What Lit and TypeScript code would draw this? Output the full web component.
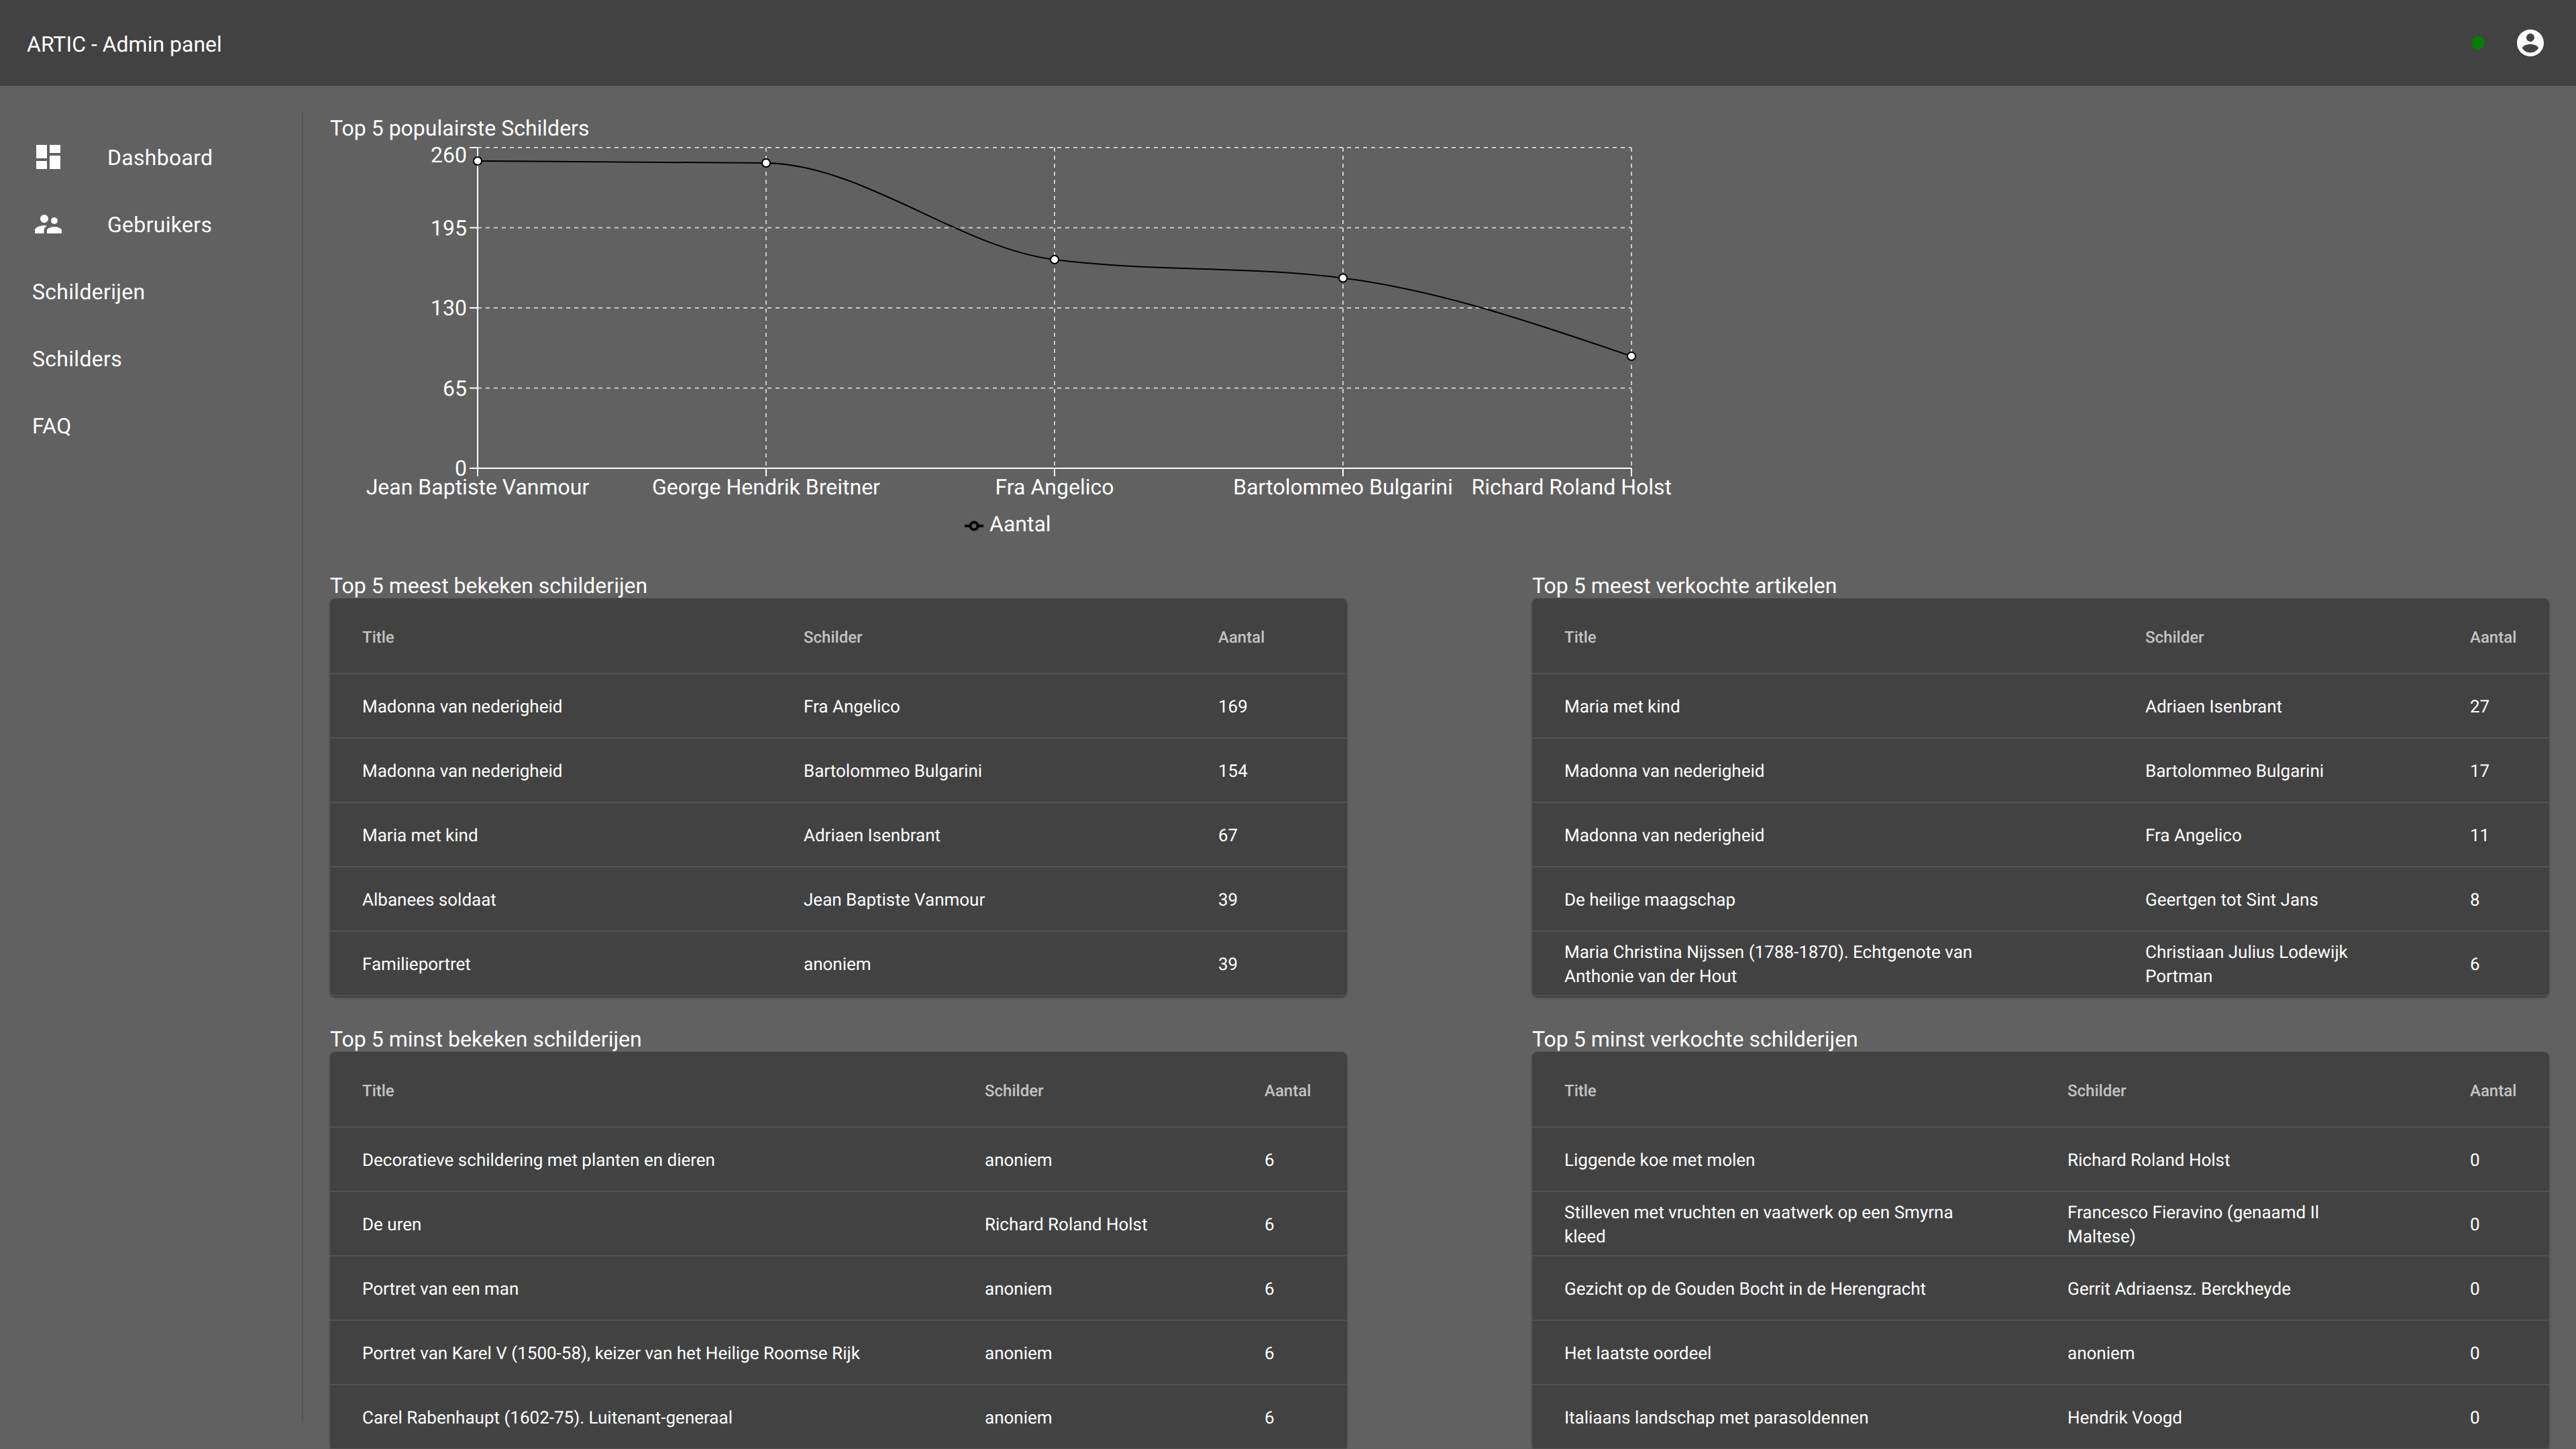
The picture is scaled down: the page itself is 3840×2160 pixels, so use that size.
import { LitElement, html, svg, css } from "lit";
import { customElement } from "lit/decorators.js";

type Row = [string, string, string];
type TopTable = { title: string; cols: number[]; rows: Row[] };

const tables: TopTable[] = [
  {
    title: "Top 5 meest bekeken schilderijen",
    cols: [658, 618, 240],
    rows: [
      ["Madonna van nederigheid", "Fra Angelico", "169"],
      ["Madonna van nederigheid", "Bartolommeo Bulgarini", "154"],
      ["Maria met kind", "Adriaen Isenbrant", "67"],
      ["Albanees soldaat", "Jean Baptiste Vanmour", "39"],
      ["Familieportret", "anoniem", "39"],
    ],
  },
  {
    title: "Top 5 meest verkochte artikelen",
    cols: [866, 484, 166],
    rows: [
      ["Maria met kind", "Adriaen Isenbrant", "27"],
      ["Madonna van nederigheid", "Bartolommeo Bulgarini", "17"],
      ["Madonna van nederigheid", "Fra Angelico", "11"],
      ["De heilige maagschap", "Geertgen tot Sint Jans", "8"],
      ["Maria Christina Nijssen (1788-1870). Echtgenote van Anthonie van der Hout", "Christiaan Julius Lodewijk Portman", "6"],
    ],
  },
  {
    title: "Top 5 minst bekeken schilderijen",
    cols: [928, 417, 171],
    rows: [
      ["Decoratieve schildering met planten en dieren", "anoniem", "6"],
      ["De uren", "Richard Roland Holst", "6"],
      ["Portret van een man", "anoniem", "6"],
      ["Portret van Karel V (1500-58), keizer van het Heilige Roomse Rijk", "anoniem", "6"],
      ["Carel Rabenhaupt (1602-75). Luitenant-generaal", "anoniem", "6"],
    ],
  },
  {
    title: "Top 5 minst verkochte schilderijen",
    cols: [750, 600, 166],
    rows: [
      ["Liggende koe met molen", "Richard Roland Holst", "0"],
      ["Stilleven met vruchten en vaatwerk op een Smyrna kleed", "Francesco Fieravino (genaamd Il Maltese)", "0"],
      ["Gezicht op de Gouden Bocht in de Herengracht", "Gerrit Adriaensz. Berckheyde", "0"],
      ["Het laatste oordeel", "anoniem", "0"],
      ["Italiaans landschap met parasoldennen", "Hendrik Voogd", "0"],
    ],
  },
];

// svg coordinates: the chart box starts at 492,210 on the page
const xs = [220, 650, 1080, 1510, 1940];
const ys = [30, 33, 177, 204.5, 321];
const gridY = [10, 129.5, 249, 368.5, 488];
const yLabels = ["260", "195", "130", "65", "0"];
const names = ["Jean Baptiste Vanmour", "George Hendrik Breitner", "Fra Angelico", "Bartolommeo Bulgarini", "Richard Roland Holst"];

// same curve as d3's curveMonotoneX
function monotonePath(px: number[], py: number[]) {
  const n = px.length;
  const s: number[] = [];
  for (let i = 0; i < n - 1; i++) s.push((py[i + 1] - py[i]) / (px[i + 1] - px[i]));
  const t: number[] = [];
  for (let i = 1; i < n - 1; i++) {
    const h0 = px[i] - px[i - 1];
    const h1 = px[i + 1] - px[i];
    const p = (s[i - 1] * h1 + s[i] * h0) / (h0 + h1);
    t[i] = (Math.sign(s[i - 1]) + Math.sign(s[i])) * Math.min(Math.abs(s[i - 1]), Math.abs(s[i]), 0.5 * Math.abs(p)) || 0;
  }
  t[0] = (3 * s[0] - t[1]) / 2;
  t[n - 1] = (3 * s[n - 2] - t[n - 2]) / 2;
  let d = `M${px[0]},${py[0]}`;
  for (let i = 0; i < n - 1; i++) {
    const h = (px[i + 1] - px[i]) / 3;
    d += `C${px[i] + h},${py[i] + h * t[i]} ${px[i + 1] - h},${py[i + 1] - h * t[i + 1]} ${px[i + 1]},${py[i + 1]}`;
  }
  return d;
}

@customElement("app-root")
export class AppRoot extends LitElement {
  static styles = css`
    :host {
      display: block;
      min-height: 2160px;
      background: #616161;
      color: #fff;
      font-family: Roboto, "Liberation Sans", sans-serif;
      text-rendering: geometricPrecision;
    }
    .bar {
      height: 128px;
      background: #424242;
      display: flex;
      align-items: center;
      padding: 0 44px 0 40px;
      font-size: 32px;
      box-sizing: border-box;
    }
    .bar-title {
      flex: 1;
      padding-top: 4px;
    }
    .dot {
      width: 20px;
      height: 20px;
      border-radius: 50%;
      background: #008000;
      margin-right: 44px;
    }
    .bar svg {
      width: 48px;
      height: 48px;
      fill: #fff;
      display: block;
    }
    .layout {
      display: flex;
      align-items: flex-start;
    }
    .side {
      width: 452px;
      height: 1951px;
      margin-top: 40px;
      padding-top: 16px;
      box-sizing: border-box;
      border-right: 2px solid #555;
      flex: none;
    }
    .item {
      height: 100px;
      display: flex;
      align-items: center;
      padding-left: 48px;
      font-size: 32px;
      letter-spacing: 0.3px;
    }
    .label {
      padding-top: 2px;
    }
    .item svg {
      width: 48px;
      height: 48px;
      fill: #fff;
      margin-right: 64px;
      flex: none;
    }
    .main {
      flex: 1;
      min-width: 0;
      padding: 44px 40px 0;
    }
    .heading {
      font-size: 32px;
      line-height: 38px;
    }
    .chart {
      display: block;
      width: 2000px;
      height: 600px;
      margin-bottom: 44px;
    }
    .chart text {
      font-family: Roboto, "Liberation Sans", sans-serif;
      font-size: 32px;
      fill: #fff;
    }
    .grid {
      display: grid;
      grid-template-columns: 1516px 1516px;
      column-gap: 276px;
      row-gap: 45px;
    }
    .card {
      background: #424242;
      border-radius: 8px;
      box-shadow: 0 2px 2px 0 rgba(0, 0, 0, 0.14), 0 2px 4px 0 rgba(0, 0, 0, 0.2), 0 4px 2px -2px rgba(0, 0, 0, 0.12);
    }
    table {
      width: 100%;
      table-layout: fixed;
      border-collapse: collapse;
    }
    th,
    td {
      text-align: left;
      padding: 4px 112px 0 48px;
      border-bottom: 2px solid #515151;
      box-sizing: border-box;
    }
    th:last-child,
    td:last-child {
      padding-right: 48px;
    }
    th {
      height: 112px;
      font-size: 24px;
      font-weight: 500;
      color: rgba(255, 255, 255, 0.7);
    }
    td {
      height: 96px;
      font-size: 26px;
      line-height: 36px;
      font-weight: 400;
    }
  `;

  private renderChart() {
    const [l, r] = [xs[0], xs[4]];
    return html`<svg class="chart" viewBox="0 0 2000 600" xmlns="http://www.w3.org/2000/svg">
      ${gridY.slice(0, 4).map((y) => svg`<line x1=${l} x2=${r} y1=${y} y2=${y} stroke="#ccc" stroke-width="2" stroke-dasharray="6 6"></line>`)}
      ${xs.slice(1).map((x) => svg`<line x1=${x} x2=${x} y1=${gridY[0]} y2=${gridY[4]} stroke="#ccc" stroke-width="2" stroke-dasharray="6 6"></line>`)}
      <line x1=${l} x2=${l} y1=${gridY[0]} y2=${gridY[4]} stroke="#fff" stroke-width="2"></line>
      <line x1=${l} x2=${r} y1=${gridY[4]} y2=${gridY[4]} stroke="#fff" stroke-width="2"></line>
      ${gridY.map((y, i) => svg`
        <line x1=${l - 12} x2=${l} y1=${y} y2=${y} stroke="#fff" stroke-width="2"></line>
        <text x=${l - 16} y=${y + (i === 0 ? 22 : 11)} text-anchor="end">${yLabels[i]}</text>`)}
      ${xs.map((x, i) => svg`
        <line x1=${x} x2=${x} y1=${gridY[4]} y2=${gridY[4] + 12} stroke="#fff" stroke-width="2"></line>
        <text x=${i === 4 ? 2000 : x} y="527" text-anchor=${i === 4 ? "end" : "middle"}>${names[i]}</text>`)}
      <path d=${monotonePath(xs, ys)} fill="none" stroke="#000" stroke-width="2"></path>
      ${xs.map((x, i) => svg`<circle cx=${x} cy=${ys[i]} r="6" fill="#fff" stroke="#000" stroke-width="2"></circle>`)}
      <line x1="946" x2="974" y1="574" y2="574" stroke="#000" stroke-width="4"></line>
      <circle cx="960" cy="574" r="5.5" fill="#616161" stroke="#000" stroke-width="4"></circle>
      <text x="983" y="582">Aantal</text>
    </svg>`;
  }

  private renderTable(t: TopTable) {
    return html`<section>
      <div class="heading">${t.title}</div>
      <div class="card">
        <table>
          <colgroup>
            ${t.cols.map((w) => html`<col style="width: ${w}px" />`)}
          </colgroup>
          <thead>
            <tr><th>Title</th><th>Schilder</th><th>Aantal</th></tr>
          </thead>
          <tbody>
            ${t.rows.map((r) => html`<tr><td>${r[0]}</td><td>${r[1]}</td><td>${r[2]}</td></tr>`)}
          </tbody>
        </table>
      </div>
    </section>`;
  }

  render() {
    return html`
      <div class="bar">
        <div class="bar-title">ARTIC - Admin panel</div>
        <div class="dot"></div>
        <svg viewBox="0 0 24 24"><path d="M12 2C6.48 2 2 6.48 2 12s4.48 10 10 10 10-4.48 10-10S17.52 2 12 2zm0 3c1.66 0 3 1.34 3 3s-1.34 3-3 3-3-1.34-3-3 1.34-3 3-3zm0 14.2c-2.5 0-4.71-1.28-6-3.22.03-1.99 4-3.08 6-3.08 1.99 0 5.97 1.09 6 3.08-1.29 1.94-3.5 3.22-6 3.22z"></path></svg>
      </div>
      <div class="layout">
        <nav class="side">
          <div class="item">
            <svg viewBox="0 0 24 24"><path d="M3 13h8V3H3v10zm0 8h8v-6H3v6zm10 0h8V11h-8v10zm0-18v6h8V3h-8z"></path></svg>
            <span class="label">Dashboard</span>
          </div>
          <div class="item">
            <svg viewBox="0 0 24 24"><path d="M16.5 12c1.38 0 2.49-1.12 2.49-2.5S17.88 7 16.5 7C15.12 7 14 8.12 14 9.5s1.12 2.5 2.5 2.5zM9 11c1.66 0 3-1.34 3-3s-1.34-3-3-3-3 1.34-3 3 1.34 3 3 3zm7.5 3c-1.83 0-5.5.92-5.5 2.75V19h11v-2.25c0-1.83-3.67-2.75-5.5-2.75zM9 13c-2.33 0-7 1.17-7 3.5V19h6.75v-2.25c0-.85.33-2.34 2.37-3.47C10.25 13.1 9.51 13 9 13z"></path></svg>
            <span class="label">Gebruikers</span>
          </div>
          <div class="item"><span class="label">Schilderijen</span></div>
          <div class="item"><span class="label">Schilders</span></div>
          <div class="item"><span class="label">FAQ</span></div>
        </nav>
        <main class="main">
          <div class="heading">Top 5 populairste Schilders</div>
          ${this.renderChart()}
          <div class="grid">${tables.map((t) => this.renderTable(t))}</div>
        </main>
      </div>
    `;
  }
}
